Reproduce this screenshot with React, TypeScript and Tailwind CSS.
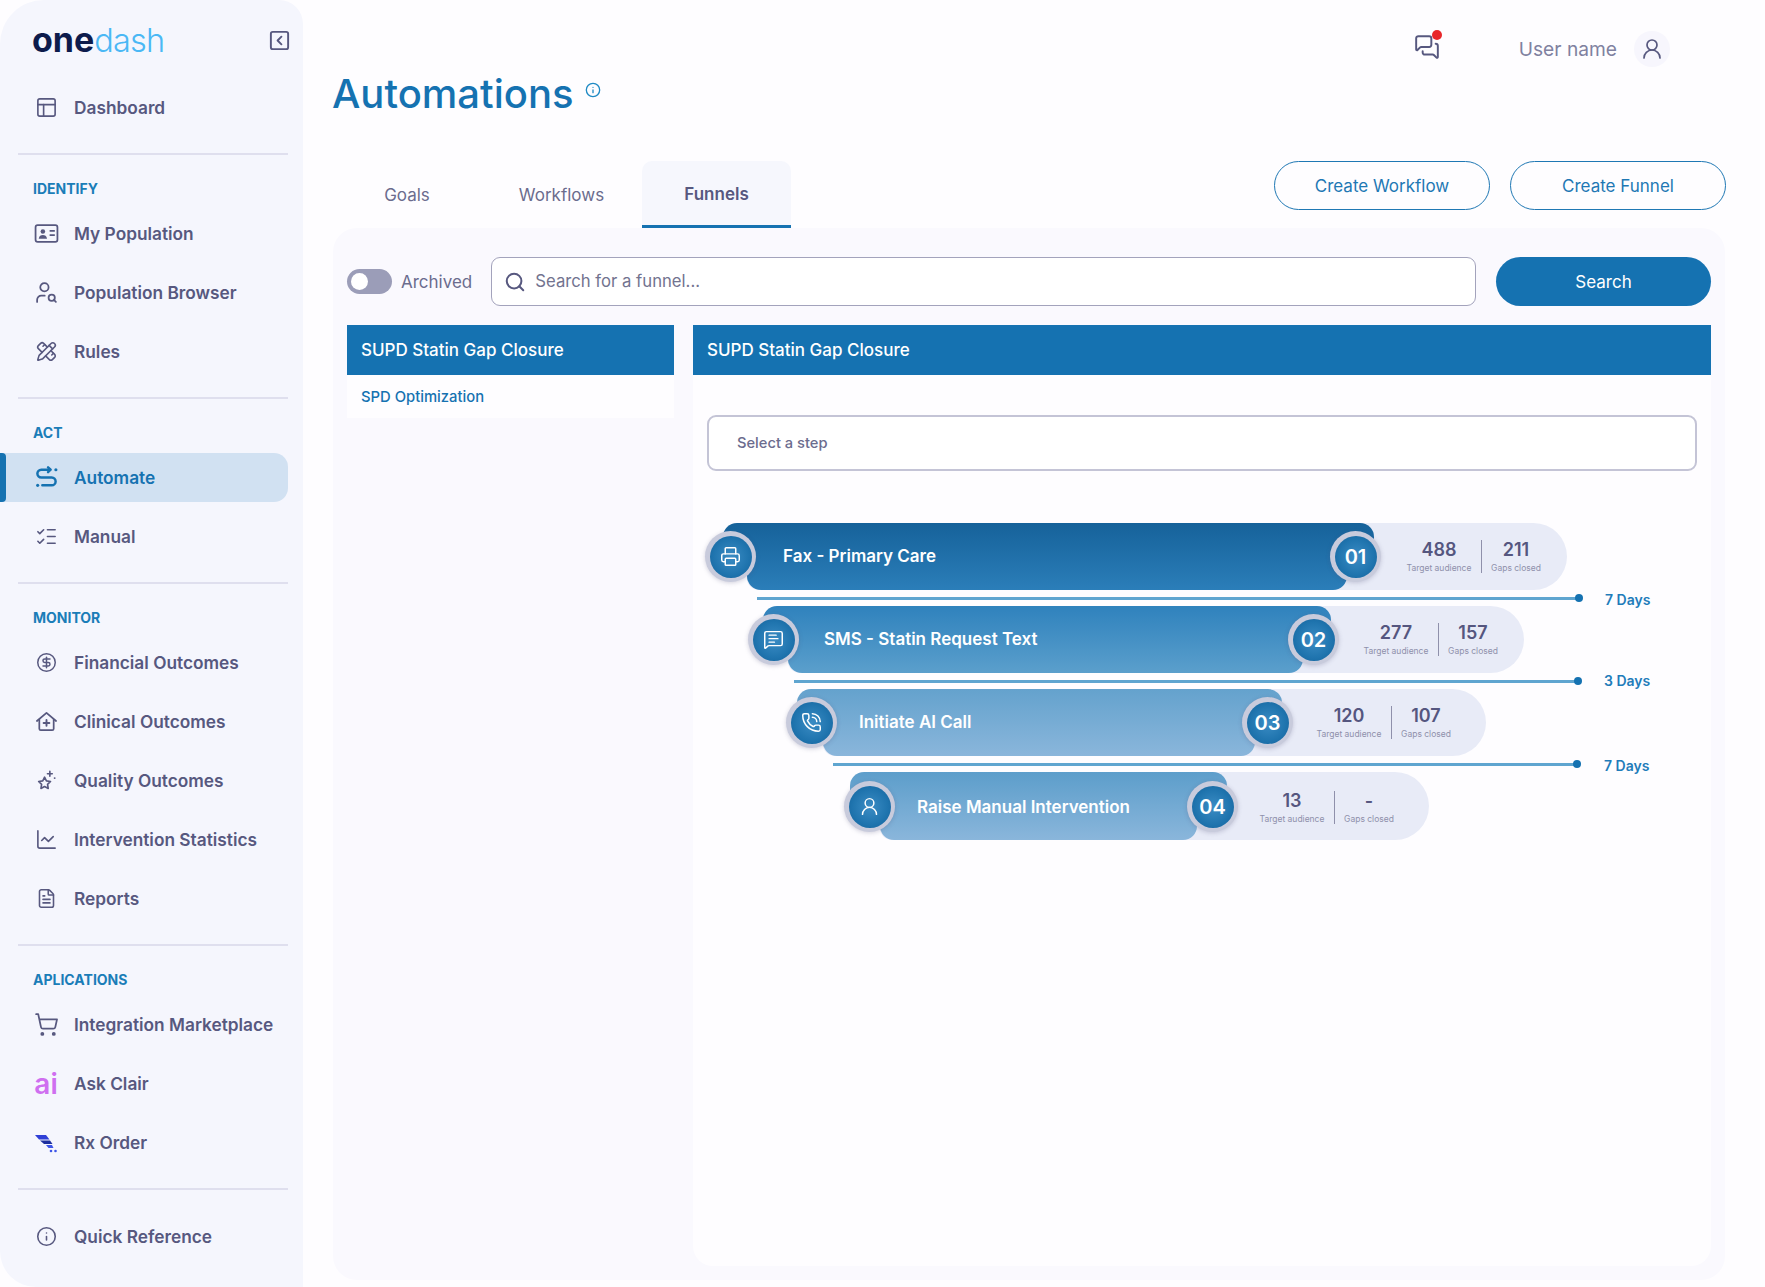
import { ChartLine, CircleDollarSign, FileText, Info, ListChecks, MessageSquareText, MessagesSquare, PanelsTopLeft, PencilRuler, PhoneCall, Printer, Search, ShoppingCart, SquareChevronLeft, UserRound, UserSearch } from "lucide-react"
import type { ReactNode } from "react"

const navIcon = "w-[23px] h-[23px] text-[#57587f]"
const wideIcon = "w-[25px] h-[25px] text-[#57587f]"
const smallIcon = "w-[21px] h-[21px] text-[#57587f]"

const PopulationIcon = () => (
    <svg viewBox="0 0 24 24" className={wideIcon} fill="none" stroke="currentColor" strokeWidth="1.7">
        <rect x="1.500" y="4" width="21" height="16" rx="2" />
        <circle cx="8.500" cy="10" r="2.200" fill="currentColor" stroke="none" />
        <path d="M4.500 17c.4-2.600 2-3.600 4-3.600s3.600 1 4 3.600z" fill="currentColor" stroke="none" />
        <path d="M15 9.500h5M15 13.500h5" />
    </svg>
)

const AutomateIcon = () => (
    <svg viewBox="0 0 24 24" className="w-[25px] h-[25px] text-[#1572b1]" fill="none" stroke="currentColor" strokeWidth="2.400" strokeLinecap="round" strokeLinejoin="round">
        <path d="M15.500 4.500H7a3.700 3.700 0 0 0 0 7.500h10a3.700 3.700 0 0 1 0 7.500H8" />
        <path d="M13.500 2.200l2.400 2.300-2.400 2.300" />
        <circle cx="21" cy="4.500" r="1.500" fill="currentColor" stroke="none" />
        <circle cx="3.500" cy="19.500" r="1.500" fill="currentColor" stroke="none" />
    </svg>
)

const ClinicalIcon = () => (
    <svg viewBox="0 0 24 24" className={navIcon} fill="none" stroke="currentColor" strokeWidth="1.800" strokeLinejoin="round" strokeLinecap="round">
        <path d="M2 11.500L12 3l10 8.500" />
        <path d="M4.500 10v9.500a1.500 1.500 0 0 0 1.500 1.500h12a1.500 1.500 0 0 0 1.500-1.500V10" />
        <path d="M12 10.500v6M9 13.500h6" strokeWidth="2" />
    </svg>
)

const QualityIcon = () => (
    <svg viewBox="0 0 24 24" className={navIcon} fill="none" stroke="currentColor" strokeWidth="1.700" strokeLinejoin="round" strokeLinecap="round">
        <path d="M10 8.500l1.900 3.900 4.300.6-3.100 3 .7 4.300-3.800-2-3.800 2 .7-4.300-3.100-3 4.300-.6z" />
        <path d="M15.500 2.500v5M13 5h5" />
        <circle cx="20.500" cy="9.500" r="1" fill="currentColor" stroke="none" />
    </svg>
)

const RxIcon = () => (
    <svg viewBox="0 0 24 24" className="w-[24px] h-[24px]">
        <path d="M1 4h11l3.500 4.500H5z" fill="#2f3fd6" />
        <path d="M6 9.500h10l2.500 3.500H10z" fill="#1d2f9e" />
        <path d="M12 14h6l1.500 3h-5z" fill="#3d55e8" />
        <circle cx="17" cy="20" r="1.300" fill="#3d55e8" />
        <circle cx="21.500" cy="20" r="1.300" fill="#3d55e8" />
    </svg>
)

const NavItem = ({ icon, label, active }: { icon: ReactNode, label: string, active?: boolean }) => (
    <div className={active
        ? "relative flex items-center h-[49px] rounded-r-[14px] bg-[#d1e1f2] text-[#1572b1]"
        : "flex items-center h-[49px] text-[#57587f]"}>
        {active ? <div className="absolute left-0 top-0 h-full w-[6px] rounded-r-[4px] bg-[#1572b1]" /> : ''}
        <div className="w-[74px] pl-[18px] flex justify-center shrink-0">{icon}</div>
        <span className="text-[17.300px] font-semibold whitespace-nowrap">{label}</span>
    </div>
)

const Divider = () => <div className="ml-[18px] mt-[21px] h-[2px] bg-[#dfdfee]" />

const SectionLabel = ({ children }: { children: string }) => (
    <div className="ml-[33px] mt-[24px] mb-[10px] h-[20px] leading-[20px] text-[14px] font-bold text-[#1a7db8]">{children}</div>
)

const Sidebar = () => (
    <aside className="w-[303px] shrink-0 pr-[15px] bg-[#f5f6fd] rounded-tl-[44px] rounded-bl-[36px] rounded-tr-[24px]">
        <div className="h-[83px] pl-[32px] flex items-center justify-between">
            <div className="text-[34px] leading-none pb-[2px]">
                <span className="font-bold text-[#0d1b4c]">one</span><span className="text-[32.500px] font-light text-[#4ab8f5] tracking-[-0.800px]">dash</span>
            </div>
            <SquareChevronLeft className="w-[23px] h-[23px] -mr-[3px] -mt-[2px] text-[#57587f]" strokeWidth={2} />
        </div>
        <NavItem icon={<PanelsTopLeft className={navIcon} strokeWidth={1.7} />} label="Dashboard" />
        <Divider />
        <SectionLabel>IDENTIFY</SectionLabel>
        <div className="flex flex-col gap-[10px]">
            <NavItem icon={<PopulationIcon />} label="My Population" />
            <NavItem icon={<UserSearch className={wideIcon} strokeWidth={1.7} />} label="Population Browser" />
            <NavItem icon={<PencilRuler className={smallIcon} strokeWidth={1.8} />} label="Rules" />
        </div>
        <Divider />
        <SectionLabel>ACT</SectionLabel>
        <div className="flex flex-col gap-[10px]">
            <NavItem active icon={<AutomateIcon />} label="Automate" />
            <NavItem icon={<ListChecks className={navIcon} strokeWidth={1.7} />} label="Manual" />
        </div>
        <Divider />
        <SectionLabel>MONITOR</SectionLabel>
        <div className="flex flex-col gap-[10px]">
            <NavItem icon={<CircleDollarSign className={smallIcon} strokeWidth={1.7} />} label="Financial Outcomes" />
            <NavItem icon={<ClinicalIcon />} label="Clinical Outcomes" />
            <NavItem icon={<QualityIcon />} label="Quality Outcomes" />
            <NavItem icon={<ChartLine className={navIcon} strokeWidth={1.7} />} label="Intervention Statistics" />
            <NavItem icon={<FileText className={smallIcon} strokeWidth={1.8} />} label="Reports" />
        </div>
        <Divider />
        <SectionLabel>APLICATIONS</SectionLabel>
        <div className="flex flex-col gap-[10px]">
            <NavItem icon={<ShoppingCart className={wideIcon} strokeWidth={1.7} />} label="Integration Marketplace" />
            <NavItem icon={<span className="text-[28px] leading-none font-semibold text-[#cf6ff0]">ai</span>} label="Ask Clair" />
            <NavItem icon={<RxIcon />} label="Rx Order" />
        </div>
        <Divider />
        <div className="mt-[22px]">
            <NavItem icon={<Info className={smallIcon} strokeWidth={1.8} />} label="Quick Reference" />
        </div>
    </aside>
)

const Stat = ({ value, label, width }: { value: string, label: string, width: string }) => (
    <div className={"flex flex-col items-center " + width}>
        <span className="text-[18px] leading-[22px] font-semibold text-[#55567f]">{value}</span>
        <span className="text-[8.500px] leading-[12px] mt-[1px] text-[#8f90ab] whitespace-nowrap">{label}</span>
    </div>
)

const StepBadge = ({ className, children }: { className: string, children: ReactNode }) => (
    <div className={"absolute w-[51px] h-[51px] rounded-full bg-[#c8cbdc] flex items-center justify-center shadow-[0_1px_4px_rgba(80,80,120,0.25)] " + className}>
        <div className="w-[42px] h-[42px] rounded-full bg-[radial-gradient(circle,#3b8cc4_0%,#1f74ae_60%,#135f98_100%)] flex items-center justify-center text-white text-[20px] font-semibold">
            {children}
        </div>
    </div>
)

type Step = {
    title: string
    number: string
    icon: ReactNode
    rowClass: string
    barClass: string
    tabClass: string
    leftBadge: string
    rightBadge: string
    statsClass: string
    gradient: string
    target: string
    gaps: string
}

const stepIcon = "w-[21px] h-[21px] text-white"

const steps: Step[] = [
    {
        title: "Fax - Primary Care", number: "01", icon: <Printer className={stepIcon} strokeWidth={1.7} />,
        rowClass: "h-[67px] ml-[54px] w-[820px]", barClass: "w-[600px] pl-[36px]", tabClass: "-left-[24px] w-[651px]",
        leftBadge: "top-[8px] -left-[42px]", rightBadge: "top-[8px] left-[583px]", statsClass: "ml-[50px]",
        gradient: "bg-[linear-gradient(180deg,#16629a_0%,#2b7eb9_100%)]", target: "488", gaps: "211",
    },
    {
        title: "SMS - Statin Request Text", number: "02", icon: <MessageSquareText className={stepIcon} strokeWidth={1.7} />,
        rowClass: "h-[67px] ml-[95px] w-[736px]", barClass: "w-[515px] pl-[36px]", tabClass: "-left-[25px] w-[568px]",
        leftBadge: "top-[8px] -left-[40px]", rightBadge: "top-[8px] left-[500px]", statsClass: "ml-[51px]",
        gradient: "bg-[linear-gradient(180deg,#2f82bd_0%,#5b9fcc_100%)]", target: "277", gaps: "157",
    },
    {
        title: "Initiate AI Call", number: "03", icon: <PhoneCall className={stepIcon} strokeWidth={1.7} />,
        rowClass: "h-[67px] ml-[130px] w-[663px]", barClass: "w-[432px] pl-[36px]", tabClass: "-left-[26px] w-[485px]",
        leftBadge: "top-[8px] -left-[37px]", rightBadge: "top-[8px] left-[419px]", statsClass: "ml-[52px]",
        gradient: "bg-[linear-gradient(180deg,#64a2cd_0%,#8ab6db_100%)]", target: "120", gaps: "107",
    },
    {
        title: "Raise Manual Intervention", number: "04", icon: <UserRound className={stepIcon} strokeWidth={1.7} />,
        rowClass: "h-[68px] ml-[187px] w-[549px] pt-[1px]", barClass: "w-[317px] -mt-[1px] pl-[37px] pt-[3px]", tabClass: "-left-[30px] w-[377px]",
        leftBadge: "top-[9px] -left-[36px]", rightBadge: "top-[9px] left-[307px]", statsClass: "ml-[53px] mt-[2px]",
        gradient: "bg-[linear-gradient(180deg,#5d9ecb_0%,#8ab6db_100%)]", target: "13", gaps: "-",
    },
]

const FunnelRow = ({ step }: { step: Step }) => (
    <div className={"relative flex items-center bg-[#e8ebf7] rounded-l-[14px] rounded-r-[40px] " + step.rowClass}>
        <div className={"absolute top-0 h-[40px] rounded-t-[14px] bg-[length:100%_67px] bg-no-repeat " + step.gradient + " " + step.tabClass} />
        <div className={"relative h-full flex items-center rounded-b-[14px] " + step.gradient + " " + step.barClass}>
            <span className="text-[17px] font-semibold text-white whitespace-nowrap">{step.title}</span>
        </div>
        <StepBadge className={step.leftBadge}>{step.icon}</StepBadge>
        <StepBadge className={step.rightBadge}>{step.number}</StepBadge>
        <div className={"flex items-center " + step.statsClass}>
            <Stat value={step.target} label="Target audience" width="w-[84px]" />
            <div className="w-px h-[33px] bg-[#8f90ab]" />
            <Stat value={step.gaps} label="Gaps closed" width="w-[68px]" />
        </div>
    </div>
)

const Connector = ({ className, label, textClass }: { className: string, label: string, textClass: string }) => (
    <div className="h-[16px] flex items-center">
        <div className={"h-[3px] bg-[#5fa5d0] " + className} />
        <div className="w-[8px] h-[8px] -ml-[4px] rounded-full bg-[#1572b1]" />
        <span className={"text-[14px] font-semibold text-[#1f7cba] whitespace-nowrap " + textClass}>{label}</span>
    </div>
)

const Funnel = () => (
    <div className="mt-[52px] flex flex-col">
        <FunnelRow step={steps[0]} />
        <Connector className="ml-[64px] w-[822px]" label="7 Days" textClass="ml-[22px] mt-[2px]" />
        <FunnelRow step={steps[1]} />
        <Connector className="ml-[101px] w-[784px]" label="3 Days" textClass="ml-[22px] -mt-[2px]" />
        <FunnelRow step={steps[2]} />
        <Connector className="ml-[140px] w-[744px]" label="7 Days" textClass="ml-[23px] mt-[3px]" />
        <FunnelRow step={steps[3]} />
    </div>
)

const Tab = ({ label, className }: { label: string, className: string }) => (
    <div className={"h-full flex items-center justify-center pt-[3px] text-[17px] " + className}>{label}</div>
)

export default function App() {
    return (
        <div className="w-[1765px] h-[1287px] flex bg-[#fefdff] overflow-hidden font-['Inter',sans-serif]">
            <Sidebar />
            <main className="flex-1 flex flex-col pl-[30px] pr-[39px]">
                <div className="h-[97px] -mb-[27px] flex items-center justify-end pr-[56px]">
                    <div className="relative mr-[79px] -mt-[3px]">
                        <MessagesSquare className="w-[26px] h-[26px] text-[#57587f]" strokeWidth={1.8} />
                        <div className="absolute -top-[4px] -right-[2px] w-[10px] h-[10px] rounded-full bg-[#e8262a]" />
                    </div>
                    <span className="text-[19.200px] pt-[1px] text-[#80819f]">User name</span>
                    <div className="ml-[17px] w-[36px] h-[36px] rounded-full bg-[#f7f6fd] flex items-center justify-center">
                        <UserRound className="w-[24px] h-[24px] text-[#57587f]" strokeWidth={1.7} />
                    </div>
                </div>
                <div className="h-[50px] flex items-center">
                    <h1 className="text-[40px] -ml-[1px] -mt-[2px] font-medium text-[#1572b1]">Automations</h1>
                    <Info className="ml-[11px] -mt-[10px] w-[16px] h-[16px] text-[#1f8ac4]" strokeWidth={2} />
                </div>
                <div className="mt-[41px] h-[67px] flex justify-between">
                    <div className="flex h-full">
                        <Tab label="Goals" className="w-[143px] pl-[5px] text-[#6b6c8e]" />
                        <Tab label="Workflows" className="w-[171px] text-[#6b6c8e]" />
                        <Tab label="Funnels" className="w-[149px] -ml-[5px] font-semibold text-[#57587f] bg-[#f6f7fd] rounded-t-[10px] border-b-[3px] border-[#1572b1]" />
                    </div>
                    <div className="flex gap-[20px] items-start">
                        <button className="w-[216px] h-[49px] pt-[2px] rounded-full border-[1.500px] border-[#1f78b4] text-[17px] text-[#1f78b4]">Create Workflow</button>
                        <button className="w-[216px] h-[49px] pt-[2px] rounded-full border-[1.500px] border-[#1f78b4] text-[17px] text-[#1f78b4]">Create Funnel</button>
                    </div>
                </div>
                <section className="h-[1052px] mr-[1px] bg-[#faf9fe] rounded-[24px] px-[14px] pt-[29px] pb-[14px] flex flex-col">
                    <div className="h-[49px] flex items-center">
                        <div className="w-[45px] h-[25px] rounded-full bg-[#9b9db8] flex items-center pl-[4px]">
                            <div className="w-[17px] h-[17px] rounded-full bg-white" />
                        </div>
                        <span className="ml-[9px] pt-[2px] text-[17px] text-[#6b6c8e]">Archived</span>
                        <div className="ml-[19px] flex-1 h-full bg-white border-[1.500px] border-[#a3a3bc] rounded-[9px] flex items-center pl-[12px]">
                            <Search className="w-[22px] h-[22px] text-[#57587f]" strokeWidth={2.2} />
                            <span className="ml-[9px] text-[16.700px] text-[#72738f]">Search for a funnel...</span>
                        </div>
                        <button className="ml-[20px] w-[215px] h-full pt-[2px] rounded-full bg-[#1572b1] text-[17px] text-white">Search</button>
                    </div>
                    <div className="mt-[19px] flex-1 flex gap-[19px]">
                        <div className="w-[327px] shrink-0">
                            <div className="h-[50px] flex items-center pt-[2px] pl-[14px] bg-[#1572b1] text-[17px] font-medium text-white">SUPD Statin Gap Closure</div>
                            <div className="h-[43px] flex items-center pt-[1px] pl-[14px] bg-[#fefdff] text-[14.800px] font-medium text-[#1572b1]">SPD Optimization</div>
                        </div>
                        <div className="flex-1 bg-[#fefdff] rounded-b-[20px]">
                            <div className="h-[50px] flex items-center pt-[2px] pl-[14px] bg-[#1572b1] text-[17px] font-medium text-white">SUPD Statin Gap Closure</div>
                            <div className="mt-[40px] mx-[14px] h-[56px] flex items-center pl-[28px] pt-[1px] bg-white border-2 border-[#c4c4d6] rounded-[9px] text-[14.700px] font-medium text-[#6b6c8e]">Select a step</div>
                            <Funnel />
                        </div>
                    </div>
                </section>
            </main>
        </div>
    )
}
